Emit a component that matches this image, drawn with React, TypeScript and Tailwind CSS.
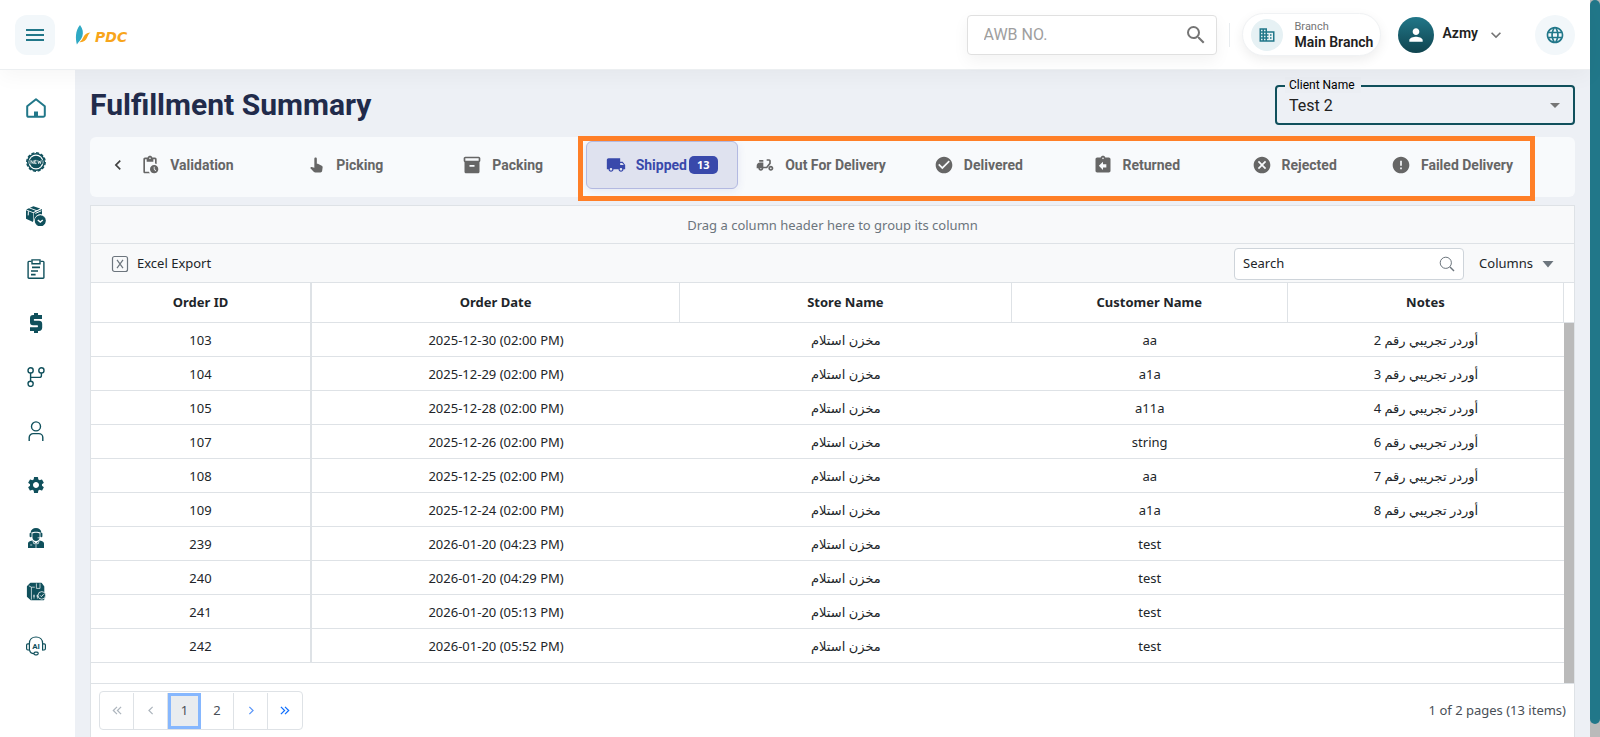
import type { ReactNode } from "react";
import {
  MdArrowDropDown,
  MdAssignmentReturn,
  MdBusiness,
  MdCancel,
  MdCheckCircle,
  MdChevronLeft,
  MdDeliveryDining,
  MdError,
  MdInventory2,
  MdKeyboardArrowDown,
  MdLanguage,
  MdLocalShipping,
  MdMenu,
  MdPanToolAlt,
  MdPendingActions,
  MdPerson,
  MdSearch,
  MdSettings,
} from "react-icons/md";

type Order = {
  id: number;
  date: string;
  customer: string;
  note: string;
};

const STORE = "مخزن استلام";

const orders: Order[] = [
  { id: 103, date: "2025-12-30 (02:00 PM)", customer: "aa", note: "أوردر تجريبي رقم 2" },
  { id: 104, date: "2025-12-29 (02:00 PM)", customer: "a1a", note: "أوردر تجريبي رقم 3" },
  { id: 105, date: "2025-12-28 (02:00 PM)", customer: "a11a", note: "أوردر تجريبي رقم 4" },
  { id: 107, date: "2025-12-26 (02:00 PM)", customer: "string", note: "أوردر تجريبي رقم 6" },
  { id: 108, date: "2025-12-25 (02:00 PM)", customer: "aa", note: "أوردر تجريبي رقم 7" },
  { id: 109, date: "2025-12-24 (02:00 PM)", customer: "a1a", note: "أوردر تجريبي رقم 8" },
  { id: 239, date: "2026-01-20 (04:23 PM)", customer: "test", note: "" },
  { id: 240, date: "2026-01-20 (04:29 PM)", customer: "test", note: "" },
  { id: 241, date: "2026-01-20 (05:13 PM)", customer: "test", note: "" },
  { id: 242, date: "2026-01-20 (05:52 PM)", customer: "test", note: "" },
];

const statuses = [
  { label: "Validation", icon: MdPendingActions },
  { label: "Picking", icon: MdPanToolAlt },
  { label: "Packing", icon: MdInventory2 },
  { label: "Shipped", icon: MdLocalShipping, count: 13 },
  { label: "Out For Delivery", icon: MdDeliveryDining },
  { label: "Delivered", icon: MdCheckCircle },
  { label: "Returned", icon: MdAssignmentReturn },
  { label: "Rejected", icon: MdCancel },
  { label: "Failed Delivery", icon: MdError },
];

const columns = ["Order Date", "Store Name", "Customer Name", "Notes"];

function Icon({ children }: { children: ReactNode }) {
  return (
    <svg viewBox="0 0 20 20" className="h-5 w-5" fill="none" stroke="currentColor" strokeWidth="1.4">
      {children}
    </svg>
  );
}

const HomeIcon = () => (
  <Icon>
    <path d="M1.2 8.2 10 1.2l8.800 7v9a1.600 1.600 0 0 1-1.600 1.600H2.800a1.600 1.600 0 0 1-1.600-1.600Z" strokeWidth="2" strokeLinejoin="round" />
    <path d="M8 19v-5.500h4V19Z" fill="currentColor" stroke="none" />
  </Icon>
);

const NewBadgeIcon = () => (
  <Icon>
    <circle cx="10" cy="10" r="8.300" strokeWidth="1.600" />
    <circle cx="10" cy="10" r="9.200" strokeWidth="1.400" strokeDasharray="3 1.800" />
    <circle cx="10" cy="10" r="6.300" fill="currentColor" stroke="none" />
    <rect x="3.400" y="7.800" width="13.200" height="4.400" fill="currentColor" stroke="none" />
    <path d="M5 11.700V8.400l2.200 3.300V8.400M10.600 8.400H8.600v3.200h2M8.600 10h1.800M11.800 8.200l.8 3.400.9-2.600.9 2.600.8-3.400" stroke="#fff" strokeWidth=".8" />
  </Icon>
);

const BoxCheckIcon = () => (
  <Icon>
    <g fill="currentColor" stroke="none">
      <path d="M0 4.200 7 6.900v9L0 12.800Z" />
      <path d="M.2 3.500 3 2.200l6.800 2.500-2.600 1.500ZM4 1.800 7.400.2l6.800 2.400-3.300 1.700Z" />
      <path d="M7.600 6.900 16 3v5.400a6.600 6.600 0 0 0-7.200 4.600l-1.200 2.600Z" />
      <circle cx="14.300" cy="14.800" r="5.700" />
    </g>
    <path d="m2.200 9.400.2-4.200M9.400 7.400l6-2.600" stroke="#fff" strokeWidth="1" />
    <circle cx="14.300" cy="14.800" r="6" stroke="#fff" strokeWidth=".6" />
    <path d="m11.800 14 2.500 2.100 2.500-2.100" stroke="#fff" strokeWidth="1.400" />
  </Icon>
);

const ClipboardIcon = () => (
  <Icon>
    <path d="M5.500 2.400H2.900a.8.8 0 0 0-.8.8V18.400a.8.8 0 0 0 .8.8h14.200a.8.8 0 0 0 .8-.8V3.200a.8.8 0 0 0-.8-.8h-2.600" />
    <path d="M6 .9h8v3.800H6Z" />
    <path d="M6 8.400h8M5 12h7M5 15.600h4.600" strokeWidth="1.600" />
  </Icon>
);

const DollarIcon = () => (
  <Icon>
    <path
      d="M8 0h4v2h4v4h-5.600H8.400c-.8 0-.8 1.800 0 1.800H13c2 0 3.200 1.200 3.200 3.200v3.800c0 2-1.200 3.200-3.200 3.200h-1V20H8v-2H4v-3.800h7.400c.8 0 .8-2 0-2H7c-2 0-3-1.200-3-3V5c0-1.800 1-3 3-3h1Z"
      fill="currentColor"
      stroke="none"
    />
  </Icon>
);

const BranchIcon = () => (
  <Icon>
    <circle cx="4.600" cy="3.400" r="2.600" />
    <circle cx="15.400" cy="3.400" r="2.600" />
    <circle cx="4.600" cy="16.800" r="2.600" />
    <path d="M4.600 6v8.200M15.400 6v2.400a2 2 0 0 1-2 2H4.600" />
  </Icon>
);

const UserIcon = () => (
  <Icon>
    <circle cx="10" cy="5.400" r="4.500" />
    <path d="M3.200 20v-3.400a4 4 0 0 1 4-4h5.600a4 4 0 0 1 4 4V20" />
  </Icon>
);

const AgentIcon = () => (
  <Icon>
    <g fill="currentColor" stroke="none">
      <path d="M4.600 4.600C5 1.600 7 0 10 0s5 1.600 5.400 4.600l-1 .2C13 3.400 7 3.400 5.600 4.800Z" />
      <rect x="3.600" y="4.800" width="2" height="4.400" rx="1" />
      <rect x="14.400" y="4.800" width="2" height="4.400" rx="1" />
      <path d="M6.400 5.400c1.600-1 5.600-1 7.200 0V9c0 2.400-1.600 4-3.600 4S6.400 11.400 6.400 9Z" />
      <path d="M2 20v-4.600c0-1.600 1-2.200 4.400-3l3.600 3.200 3.600-3.200c3.400.8 4.400 1.400 4.400 3V20Z" />
    </g>
    <path d="M10 15.600V20M6.800 13l1.200 3 2-1.200 2 1.200 1.200-3M4.200 17h2M11.600 9.800h2.600" stroke="#fff" strokeWidth=".7" />
  </Icon>
);

const PackageIcon = () => (
  <Icon>
    <path d="M1.600 4.600 4.600 1.400h10.600l2.400 3.200v13H5L1.600 14.600Z" fill="currentColor" strokeLinejoin="round" />
    <path d="M5.400 17.600V5.200L2.800 3.800M5.400 5.200h3.400M10.400 1.400v5h3.600v-5M8 16.600v-4M11.400 16.600v-4M7 14h2M10.400 14h2" stroke="#fff" strokeWidth=".7" />
    <circle cx="15.800" cy="13.400" r="3.800" fill="currentColor" stroke="#fff" strokeWidth=".8" />
    <path d="m14.200 13.400 1.200 1.200 2.200-2.400" stroke="#fff" strokeWidth=".9" />
  </Icon>
);

const AiIcon = () => (
  <Icon>
    <path d="M3.400 14.400V7.400C3.400 3.600 6.200 1 10 1s6.600 2.600 6.600 6.400v7" strokeWidth="1.200" />
    <path d="M3.400 7.800H1.800c-.8 0-1.200.6-1.200 1.200v3.600c0 .8.4 1.400 1.200 1.400h1.600M16.600 7.800h1.600c.8 0 1.200.6 1.200 1.200v3.600c0 .8-.4 1.400-1.200 1.400h-1.600" strokeWidth="1.200" />
    <path d="M3.600 14.200c.4 2.400 2 3.400 4.400 3.400" strokeWidth="1.200" />
    <rect x="8" y="16.200" width="4.200" height="2.600" rx="1.200" strokeWidth="1.200" />
    <text x="10" y="12.600" textAnchor="middle" fontSize="8" fontWeight="700" fontFamily="Roboto, sans-serif" fill="currentColor" stroke="none">
      AI
    </text>
  </Icon>
);

const navItems = [
  { label: "Home", icon: <HomeIcon />, active: true },
  { label: "New", icon: <NewBadgeIcon /> },
  { label: "Shipments", icon: <BoxCheckIcon /> },
  { label: "Orders", icon: <ClipboardIcon /> },
  { label: "Finance", icon: <DollarIcon /> },
  { label: "Branches", icon: <BranchIcon /> },
  { label: "Users", icon: <UserIcon /> },
  { label: "Settings", icon: <MdSettings className="h-5 w-5" /> },
  { label: "Agents", icon: <AgentIcon /> },
  { label: "Fulfillment", icon: <PackageIcon /> },
  { label: "AI Support", icon: <AiIcon /> },
];

function Logo() {
  return (
    <a href="#" className="ml-5 flex items-center gap-1 text-[#f8a51b]">
      <svg viewBox="0 0 15 20" className="h-5 w-4">
        <path d="M4.500 0C7.500 4 8 7.500 6.800 11.500 5.600 15 3.200 16.500 1.400 19.500 0 14-.5 6 4.500 0Z" fill="#2fa9c4" />
        <path d="M15 7.500c-4 .3-6 2-7.200 4.800C7 14.200 5.800 15.800 4 17.200c4.400.2 6.600-1.800 7.600-4.600.7-2 1.600-3.700 3.400-5.100Z" fill="#f8a51b" />
      </svg>
      <span className="pt-1 font-['DejaVu_Sans',sans-serif] text-sm leading-4 font-bold italic">PDC</span>
    </a>
  );
}

function Header() {
  return (
    <header className="relative z-10 flex h-[70px] shrink-0 items-center border-b border-[#eceff1] bg-white px-[15px] shadow-[0_6px_20px_rgba(0,0,0,0.04)]">
      <button aria-label="Toggle menu" className="flex h-10 w-10 items-center justify-center rounded-xl bg-[#f2f7fa] text-[#217789]">
        <MdMenu className="h-6 w-6" />
      </button>
      <Logo />

      <div className="ml-auto flex h-10 w-[250px] items-center rounded-[4px] border border-[#e0e0e0] bg-white pr-2 pl-4 shadow-[0_6px_16px_rgba(0,0,0,0.05)]">
        <input aria-label="AWB number" placeholder="AWB NO." className="min-w-0 flex-1 text-base outline-none placeholder:text-[#9e9e9e]" />
        <MdSearch className="h-6 w-6 text-[#757575]" />
      </div>
      <div className="mx-3 h-6 w-px bg-[#e8ecef]" />

      <div className="flex h-[43px] items-center gap-3 rounded-full border border-[#f0f2f4] bg-white pr-[7px] pl-2 shadow-[0_4px_12px_rgba(0,0,0,0.07)]">
        <div className="flex h-8 w-8 items-center justify-center rounded-full bg-[#e6f1f4] text-[#217789]">
          <MdBusiness className="h-[18px] w-[18px]" />
        </div>
        <div>
          <div className="text-[11px] leading-[14px] text-[#757575]">Branch</div>
          <div className="text-sm leading-4 font-semibold text-[#212121]">Main Branch</div>
        </div>
      </div>

      <button className="ml-[17px] flex items-center gap-2">
        <span className="flex h-9 w-9 items-center justify-center rounded-full bg-linear-to-b from-[#217789] to-[#10444f] text-white">
          <MdPerson className="h-5 w-5" />
        </span>
        <span className="pb-1 text-sm font-semibold text-[#212121]">Azmy</span>
        <MdKeyboardArrowDown className="h-5 w-5 text-[#757575]" />
      </button>
      <button aria-label="Language" className="ml-[29px] flex h-10 w-10 items-center justify-center rounded-full bg-[#f2f7fa] text-[#217789]">
        <MdLanguage className="h-5 w-5" />
      </button>
    </header>
  );
}

function Sidebar() {
  return (
    <nav className="flex w-[75px] shrink-0 flex-col items-center bg-white pt-7 pr-[3px]">
      <div className="flex h-[558px] flex-col justify-between">
        {navItems.map((item) => (
          <a key={item.label} href="#" aria-label={item.label} className={item.active ? "text-[#217789]" : "text-[#10505c]"}>
            {item.icon}
          </a>
        ))}
      </div>
    </nav>
  );
}

function StatusTabs() {
  return (
    <div className="relative mt-3 h-[60px] rounded-md bg-[#f8fafc] pt-1 pr-12 pl-[22px]">
      <button aria-label="Scroll left" className="absolute top-[18px] left-[18px] text-[#424242]">
        <MdChevronLeft className="h-5 w-5" />
      </button>
      <div className="flex gap-2">
        {statuses.map((s) => (
          <button
            key={s.label}
            className={
              s.count
                ? "flex h-12 flex-1 basis-0 items-center justify-center rounded-md border border-[#b3b9e1] bg-[#dfe2ef] text-sm font-bold whitespace-nowrap text-[#3949ab] shadow-[0_2px_8px_rgba(57,73,171,0.1)]"
                : "flex h-12 flex-1 basis-0 items-center justify-center text-sm font-bold whitespace-nowrap text-[#666]"
            }
          >
            <s.icon className="mr-[10px] h-5 w-5" />
            {s.label}
            {s.count && (
              <span className="ml-[2px] rounded-[5px] bg-[#3949ab] px-2 font-['Noto_Sans',sans-serif] text-[11px] leading-[18px] font-bold text-white">
                {s.count}
              </span>
            )}
          </button>
        ))}
      </div>
      {/* highlight around the shipping stages */}
      <div className="pointer-events-none absolute -top-px right-10 left-[488px] h-[65px] border-[5px] border-[#ff7f27]" />
    </div>
  );
}

function OrdersGrid() {
  return (
    <section className="mt-2 border border-[#dee2e6] bg-white font-['Noto_Sans','DejaVu_Sans',sans-serif] text-[13px] text-[#212529]">
      <div className="flex h-[38px] items-center justify-center border-b border-[#dee2e6] bg-[#f8f9fa] pt-0.5 text-[#6c757d]">
        Drag a column header here to group its column
      </div>
      <div className="flex h-[39px] items-center border-b border-[#dee2e6] bg-[#f8f9fa] pt-0.5 pr-5 pl-5">
        <button className="flex items-center gap-2">
          <svg viewBox="0 0 18 18" className="h-[18px] w-[18px] text-[#6c757d]" fill="none" stroke="currentColor" strokeWidth="1.200">
            <rect x="1.500" y="1.500" width="15" height="15" rx="2" />
            <path d="m6 4.800 6 8.400M12 4.800l-6 8.400" />
          </svg>
          Excel Export
        </button>
        <div className="ml-auto flex h-8 w-[230px] items-center rounded-[4px] border border-[#ced4da] bg-white px-2">
          <input aria-label="Search" placeholder="Search" className="min-w-0 flex-1 outline-none placeholder:text-[#212529]" />
          <svg viewBox="0 0 16 16" className="h-4 w-4 text-[#6c757d]" fill="none" stroke="currentColor" strokeWidth="1">
            <circle cx="6.800" cy="6.800" r="5.600" />
            <path d="m11 11 4 4" strokeWidth="1.500" />
          </svg>
        </div>
        <button className="ml-[15px] flex items-center gap-[9px]">
          Columns
          <svg viewBox="0 0 12 8" className="h-2 w-3 text-[#6c757d]" fill="currentColor">
            <path d="M.5 1h11L6 7.500Z" />
          </svg>
        </button>
      </div>

      <div className="flex">
        <table className="flex-1 table-fixed border-separate border-spacing-0 text-center">
          <colgroup>
            <col className="w-[15%]" />
            <col className="w-[25%]" />
            <col className="w-[22.5%]" />
            <col className="w-[18.75%]" />
            <col className="w-[18.75%]" />
          </colgroup>
          <thead>
            <tr className="h-10">
              <th className="border-r-2 border-b border-[#dee2e6] font-bold">Order ID</th>
              {columns.map((c) => (
                <th key={c} className="border-r border-b border-[#dee2e6] font-bold">
                  {c}
                </th>
              ))}
            </tr>
          </thead>
          <tbody>
            {orders.map((o) => (
              <tr key={o.id} className="h-[34px]">
                <td className="border-r-2 border-b border-[#dee2e6] pt-0.5">{o.id}</td>
                <td className="border-b border-[#dee2e6] pt-0.5">{o.date}</td>
                <td className="border-b border-[#dee2e6] pt-0.5">{STORE}</td>
                <td className="border-b border-[#dee2e6] pt-0.5">{o.customer}</td>
                <td className="border-b border-[#dee2e6] pt-0.5">{o.note}</td>
              </tr>
            ))}
          </tbody>
        </table>
        <div className="flex w-[10px] flex-col">
          <div className="h-10 border-b border-[#dee2e6]" />
          <div className="-mb-5 flex-1 bg-[#bababa]" />
        </div>
      </div>

      <div className="mt-5 flex h-[54px] items-center justify-between border-t border-[#dee2e6] px-2 text-[#495057]">
        <div className="flex h-[39px] items-center divide-x divide-[#dee2e6] rounded-[4px] border border-[#dee2e6]">
          <PageButton label="First page" className="text-[#adb5bd]" d="M7 1 2.500 5.500 7 10M12 1 7.500 5.500 12 10" />
          <PageButton label="Previous page" className="text-[#adb5bd]" d="M9 1 4.500 5.500 9 10" />
          <button className="h-9 w-[33px] border-3 border-[#86b7fe] bg-[#e9ecef]">1</button>
          <button className="h-9 w-[33px]">2</button>
          <PageButton label="Next page" className="text-[#5a96f8]" d="M5 1l4.500 4.500L5 10" />
          <PageButton label="Last page" className="text-[#0d6efd]" d="M2 1l4.500 4.500L2 10M7 1l4.500 4.500L7 10" />
        </div>
        <span>1 of 2 pages (13 items)</span>
      </div>
    </section>
  );
}

function PageButton({ label, d, className }: { label: string; d: string; className: string }) {
  return (
    <button aria-label={label} className="flex h-9 w-[34px] items-center justify-center">
      <svg viewBox="0 0 14 11" className={className + " h-[9px] w-3"} fill="none" stroke="currentColor" strokeWidth="1.500">
        <path d={d} />
      </svg>
    </button>
  );
}

export default function App() {
  return (
    <div className="flex h-screen overflow-hidden bg-[#edf0f5] font-['Roboto',sans-serif]">
      <div className="flex min-w-0 flex-1 flex-col">
        <Header />
        <div className="flex min-h-0 flex-1">
          <Sidebar />
          <main className="min-w-0 flex-1 px-[15px] pt-[15px]">
            <div className="flex h-10 items-center justify-between">
              <h1 className="text-[30px] leading-10 font-bold text-[#212b4b]">Fulfillment Summary</h1>
              <div className="relative h-10 w-[300px]">
                <label htmlFor="client" className="absolute -top-2 left-[10px] bg-[#ebeef3] pr-1.5 pl-1 text-xs leading-4 text-black">
                  Client Name
                </label>
                <select id="client" className="h-10 w-full appearance-none rounded-[4px] border-2 border-[#10505c] px-3 pt-0.5 text-base text-[#212121] outline-none">
                  <option>Test 2</option>
                </select>
                <MdArrowDropDown className="pointer-events-none absolute top-2 right-2 h-6 w-6 text-[#757575]" />
              </div>
            </div>
            <StatusTabs />
            <OrdersGrid />
          </main>
        </div>
      </div>
      {/* page scroll bar */}
      <div className="w-[10px] shrink-0 bg-[#bababa] pb-[13px]">
        <div className="h-full rounded-full bg-[#217789]" />
      </div>
    </div>
  );
}
